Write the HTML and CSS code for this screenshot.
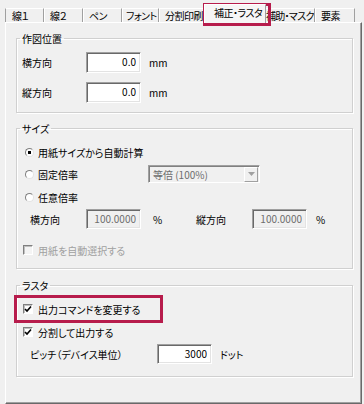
FILE: index.html
```html
<!DOCTYPE html>
<html lang="ja">
<head>
  <meta charset="UTF-8">
  <title>補正・ラスタ</title>
  <link rel="stylesheet" href="styles.css">
</head>
<body>
  <div class="dialog">
    <!-- tab strip -->
    <ul class="tabs">
      <li class="tab first w39">線１</li>
      <li class="tab w39">線２</li>
      <li class="tab w39">ペン</li>
      <li class="tab w37">フォント</li>
      <li class="tab w48">分割印刷</li>
      <li class="tab active">補正・ラスタ</li>
      <li class="tab w52">補助・マスク</li>
      <li class="tab w40">要素</li>
    </ul>

    <div class="panel">
      <!-- 作図位置 -->
      <fieldset class="group">
        <legend>作図位置</legend>
        <div class="row pos-1">
          <span class="lbl w64">横方向</span>
          <input class="num" type="text" value="0.0">
          <span class="unit">mm</span>
        </div>
        <div class="row pos-2">
          <span class="lbl w64">縦方向</span>
          <input class="num" type="text" value="0.0">
          <span class="unit">mm</span>
        </div>
      </fieldset>

      <!-- サイズ -->
      <fieldset class="group size">
        <legend>サイズ</legend>
        <div class="row opt-auto">
          <span class="radio on"></span>
          <span class="opt-text">用紙サイズから自動計算</span>
        </div>
        <div class="row opt-fixed">
          <span class="radio"></span>
          <span class="opt-text w110">固定倍率</span>
          <div class="combo">
            <span class="combo-text">等倍 (100%)</span>
            <span class="combo-btn">
              <svg width="7" height="4" viewBox="0 0 7 4"><path d="M0 0h7L3.5 4z" fill="#a0a0a0"/></svg>
            </span>
          </div>
        </div>
        <div class="row opt-free">
          <span class="radio"></span>
          <span class="opt-text">任意倍率</span>
        </div>
        <div class="row ratio">
          <span class="lbl w56">横方向</span>
          <input class="num off" type="text" value="100.0000" disabled>
          <span class="unit pct w43">%</span>
          <span class="lbl w56">縦方向</span>
          <input class="num off" type="text" value="100.0000" disabled>
          <span class="unit pct2">%</span>
        </div>
        <div class="row paper">
          <span class="check off"></span>
          <span class="opt-text muted">用紙を自動選択する</span>
        </div>
      </fieldset>

      <!-- ラスタ -->
      <fieldset class="group raster">
        <legend>ラスタ</legend>
        <div class="row cmd">
          <span class="check">
            <svg width="8" height="8" viewBox="0 0 8 8"><path d="M1 4l2 2 4-4.5" fill="none" stroke="#000" stroke-width="1.6"/></svg>
          </span>
          <span class="opt-text">出力コマンドを変更する</span>
        </div>
        <div class="row split">
          <span class="check">
            <svg width="8" height="8" viewBox="0 0 8 8"><path d="M1 4l2 2 4-4.5" fill="none" stroke="#000" stroke-width="1.6"/></svg>
          </span>
          <span class="opt-text">分割して出力する</span>
        </div>
        <div class="row pitch">
          <span class="lbl w127">ピッチ（デバイス単位）</span>
          <input class="num" type="text" value="3000">
          <span class="unit">ドット</span>
        </div>
      </fieldset>
    </div>

    <!-- red highlight frames -->
    <div class="mark mark-tab"></div>
    <div class="mark mark-opt"></div>
  </div>
</body>
</html>
```

FILE: styles.css
```css
* {
  box-sizing: border-box;
}
body {
  margin: 0;
  width: 364px;
  height: 404px;
  overflow: hidden;
  background-color: #f0f0f0;
  font-family: "Noto Sans CJK JP", "Noto Sans", sans-serif;
  font-size: 10px;
  color: #000;
  font-feature-settings: "palt";
}
.dialog {
  position: relative;
}

/* tabs */
.tabs {
  display: flex;
  align-items: flex-end;
  height: 22px;
  margin: 0;
  padding: 0 0 0 5px;
  list-style: none;
}
.tab {
  height: 14px;
  line-height: 13px;
  padding-left: 5px;
  letter-spacing: -0.5px;
  background-color: #f0f0f0;
  border-top: 1px solid #fff;
  border-left: 1px solid #fff;
  border-right: 1px solid #a0a0a0;
  white-space: nowrap;
  overflow: hidden;
}
.tab.first {
  padding-left: 6px;
  border-left-color: #a0a0a0;
}
.tab.w37 {
  padding-left: 3px;
}
.tab.w52 {
  padding-left: 2px;
  letter-spacing: -0.7px;
}
.tab.active {
  position: relative;
  z-index: 1;
  width: 62px;
  height: 19px;
  margin: 0 -3px -1px;
  padding-left: 9px;
  line-height: 16px;
  background-color: #f6f6f6;
}
.w37 { width: 37px; }
.w39 { width: 39px; }
.w40 { width: 40px; }
.w43 { width: 43px; }
.w48 { width: 48px; }
.w52 { width: 52px; }
.w56 { width: 56px; }
.w64 { width: 64px; }
.w110 { width: 110px; }
.w127 { width: 127px; }

/* panel */
.panel {
  width: 357px;
  height: 382px;
  margin-left: 5px;
  padding: 8px 8px 0 10px;
  border-top: 1px solid #fff;
  border-left: 1px solid #fff;
  border-right: 1px solid #696969;
  border-bottom: 1px solid #696969;
  box-shadow: inset -1px -1px 0 #a0a0a0;
}
.group {
  margin: 0;
  padding: 0 5px 9px 5px;
  border: 1px solid #d0d0d0;
  box-shadow: 1px 1px 0 #fff, inset 1px 1px 0 #fff;
}
.group legend {
  margin-left: -2px;
  padding: 0 2px;
  line-height: 15px;
}
.group.size {
  margin-top: 8px;
  padding-bottom: 10px;
}
.group.raster {
  margin-top: 9px;
  padding-bottom: 12px;
}

/* rows */
.row {
  display: flex;
  align-items: center;
  height: 16px;
}
.pos-1 { margin-top: 6px; height: 21px; }
.pos-2 { margin-top: 9px; height: 21px; }
.opt-auto { margin-top: 8px; }
.opt-fixed { margin-top: 5px; height: 18px; }
.opt-free { margin-top: 6px; }
.ratio { margin-top: 4px; height: 20px; padding-left: 8px; }
.paper { margin-top: 13px; }
.cmd { margin-top: 8px; }
.split { margin-top: 7px; }
.pitch { margin-top: 4px; height: 20px; padding-left: 8px; }

.lbl {
  flex: none;
}
.unit {
  margin-left: 8px;
}
.unit.pct {
  margin-left: 12px;
}
.unit.pct2 {
  margin-left: 9px;
}
.opt-text {
  flex: none;
}
.muted {
  color: #a0a0a0;
}

/* text boxes */
.num {
  width: 55px;
  height: 21px;
  padding: 0 4px 2px 2px;
  font: inherit;
  font-feature-settings: "palt";
  color: #000;
  text-align: right;
  background-color: #fff;
  border: 1px solid;
  border-color: #a0a0a0 #fff #fff #a0a0a0;
  box-shadow: inset 1px 1px 0 #696969, inset -1px -1px 0 #e3e3e3;
  outline: none;
}
.ratio .num,
.pitch .num {
  height: 20px;
}
.num.off {
  color: #6d6d6d;
  background-color: #f0f0f0;
}

/* radio & check */
.radio {
  flex: none;
  width: 9px;
  height: 9px;
  margin: 0 4px 0 3px;
  border: 1px solid;
  border-color: #808080 #e3e3e3 #e3e3e3 #808080;
  border-radius: 50%;
  background-color: #fff;
}
.radio.on {
  background: radial-gradient(circle, #000 0 1.4px, #fff 2px);
}
.check {
  flex: none;
  display: flex;
  align-items: center;
  justify-content: center;
  width: 10px;
  height: 10px;
  margin: 0 5px 0 1px;
  border: 1px solid;
  border-color: #808080 #fff #fff #808080;
  box-shadow: inset 1px 1px 0 #c0c0c0;
  background-color: #fff;
}
.check.off {
  background-color: #f4f4f4;
}

/* combo box */
.combo {
  display: flex;
  align-items: center;
  width: 112px;
  height: 18px;
  border: 1px solid;
  border-color: #a0a0a0 #fff #fff #a0a0a0;
  box-shadow: inset 1px 1px 0 #808080;
}
.combo-text {
  flex: 1;
  padding-left: 4px;
  color: #6d6d6d;
}
.combo-btn {
  display: flex;
  align-items: center;
  justify-content: center;
  width: 14px;
  height: 15px;
  margin-right: 1px;
  border: 1px solid;
  border-color: #fff #a0a0a0 #a0a0a0 #fff;
  background-color: #f0f0f0;
}

/* red highlight frames */
.mark {
  position: absolute;
  border: 3px solid #b71c4c;
}
.mark-tab {
  left: 203px;
  top: 3px;
  width: 68px;
  height: 23px;
}
.mark-opt {
  left: 14px;
  top: 295px;
  width: 149px;
  height: 28px;
}
```
